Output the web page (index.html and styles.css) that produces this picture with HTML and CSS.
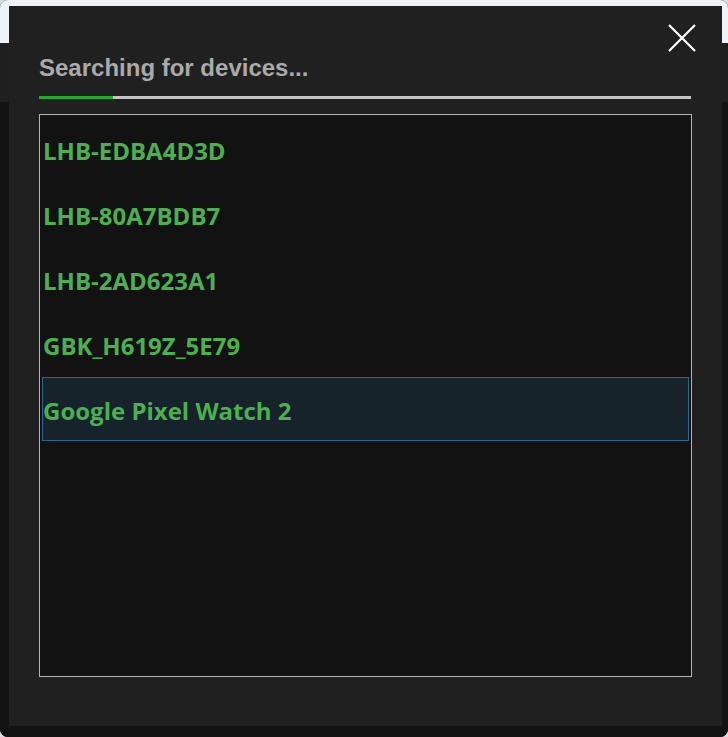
FILE: index.html
```html
<!DOCTYPE html>
<html>
<head>
<meta charset="utf-8">
<link rel="stylesheet" href="styles.css">
</head>
<body>
<div class="app">
  <div class="topbar"></div>
  <div class="header"></div>
  <div class="content"></div>
</div>
<div class="modal">
  <button class="close" aria-label="Close">
    <svg width="28" height="28" viewBox="0 0 28 28"><path d="M1 1 L27 27 M27 1 L1 27" stroke="#ffffff" stroke-width="2.2" fill="none"/></svg>
  </button>
  <h2 class="title">Searching for devices...</h2>
  <div class="progress"><div class="progress-fill"></div></div>
  <ul class="devices">
    <li class="device">LHB-EDBA4D3D</li>
    <li class="device">LHB-80A7BDB7</li>
    <li class="device">LHB-2AD623A1</li>
    <li class="device">GBK_H619Z_5E79</li>
    <li class="device selected">Google Pixel Watch 2</li>
  </ul>
</div>
</body>
</html>
```
FILE: styles.css
```css
html, body {
  margin: 0;
  padding: 0;
}
body {
  width: 728px;
  height: 737px;
  background: #d9dde2;
  overflow: hidden;
  position: relative;
}
.app {
  height: 737px;
  display: flex;
  flex-direction: column;
  border-radius: 8px;
  overflow: hidden;
  background: #121212;
}
.topbar {
  height: 43px;
  background: #eef3f9;
}
.header {
  height: 59px;
  background: #1f1f1f;
}
.content {
  flex: 1;
  background: #121212;
}
.modal {
  position: absolute;
  left: 9px;
  top: 6px;
  width: 713px;
  height: 720px;
  background: #202020;
  box-sizing: border-box;
  padding: 48px 30px 0 30px;
}
.close {
  position: absolute;
  top: 18px;
  right: 26px;
  width: 28px;
  height: 28px;
  padding: 0;
  border: 0;
  background: transparent;
  display: block;
}
.close svg {
  display: block;
}
.title {
  margin: 0;
  font-family: "Liberation Sans", Arial, sans-serif;
  font-weight: bold;
  font-size: 24px;
  line-height: 28px;
  color: #aaaaaa;
}
.progress {
  margin-top: 14px;
  width: 652px;
  height: 3px;
  background: #c4c4c4;
}
.progress-fill {
  width: 74px;
  height: 3px;
  background: #1faa2c;
}
.devices {
  list-style: none;
  margin: 15px 0 0 0;
  width: 653px;
  height: 563px;
  box-sizing: border-box;
  border: 1px solid #b4b4b4;
  background: #121212;
  padding: 2px 2px 2px 2px;
  display: flex;
  flex-direction: column;
  gap: 1px;
}
.device {
  height: 64px;
  box-sizing: border-box;
  border: 1px solid transparent;
  padding: 3px 0 0 0;
  display: flex;
  align-items: center;
  font-family: "Open Sans", "Noto Sans", sans-serif;
  font-weight: bold;
  font-size: 24px;
  color: #4caf50;
}
.device.selected {
  background: #16232b;
  border-color: #2b6a8a;
}
```
